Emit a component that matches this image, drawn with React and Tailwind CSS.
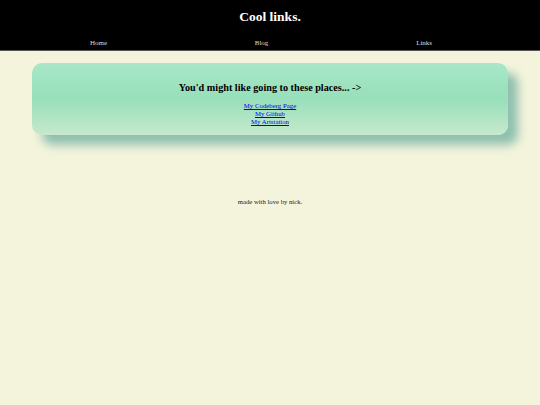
import React from 'react'

export default function App() {
  return (
    <div className="min-h-[405px] bg-[#f4f4dc] font-['Liberation_Serif',serif] text-black">
      <header className="bg-black text-white h-[51px] border-b border-[#555]">
        <h1 className="text-center text-[13.5px] font-bold pt-[8px] leading-[18px]">Cool links.</h1>
        <nav className="flex justify-around pl-[16px] pr-[34px] mt-[13px] text-[7px] leading-[8px] text-[#ddd]">
          <a href="#">Home</a>
          <a href="#">Blog</a>
          <a href="#">Links</a>
        </nav>
      </header>

      <main className="px-[32px] pt-[12px]">
        <section className="h-[72px] rounded-[10px] bg-gradient-to-b from-[#a8e7c8] via-[#97dfba] to-[#c6e9cd] shadow-[10px_10px_10px_rgba(90,165,150,0.65)] flex flex-col items-center pt-[19px]">
          <h2 className="text-[10.2px] font-bold leading-[12px]">You'd might like going to these places... -&gt;</h2>
          <div className="mt-[8px] flex flex-col items-center text-[6.8px] leading-[8px]">
            <a href="#" className="text-[#0000ee] underline">My Codeberg Page</a>
            <a href="#" className="text-[#0000ee] underline">My Github</a>
            <a href="#" className="text-[#0000ee] underline">My Artstation</a>
          </div>
        </section>
      </main>

      <footer className="text-center text-[6.7px] leading-[8px] mt-[63px] text-[#222]">made with love by nick.</footer>
    </div>
  )
}
